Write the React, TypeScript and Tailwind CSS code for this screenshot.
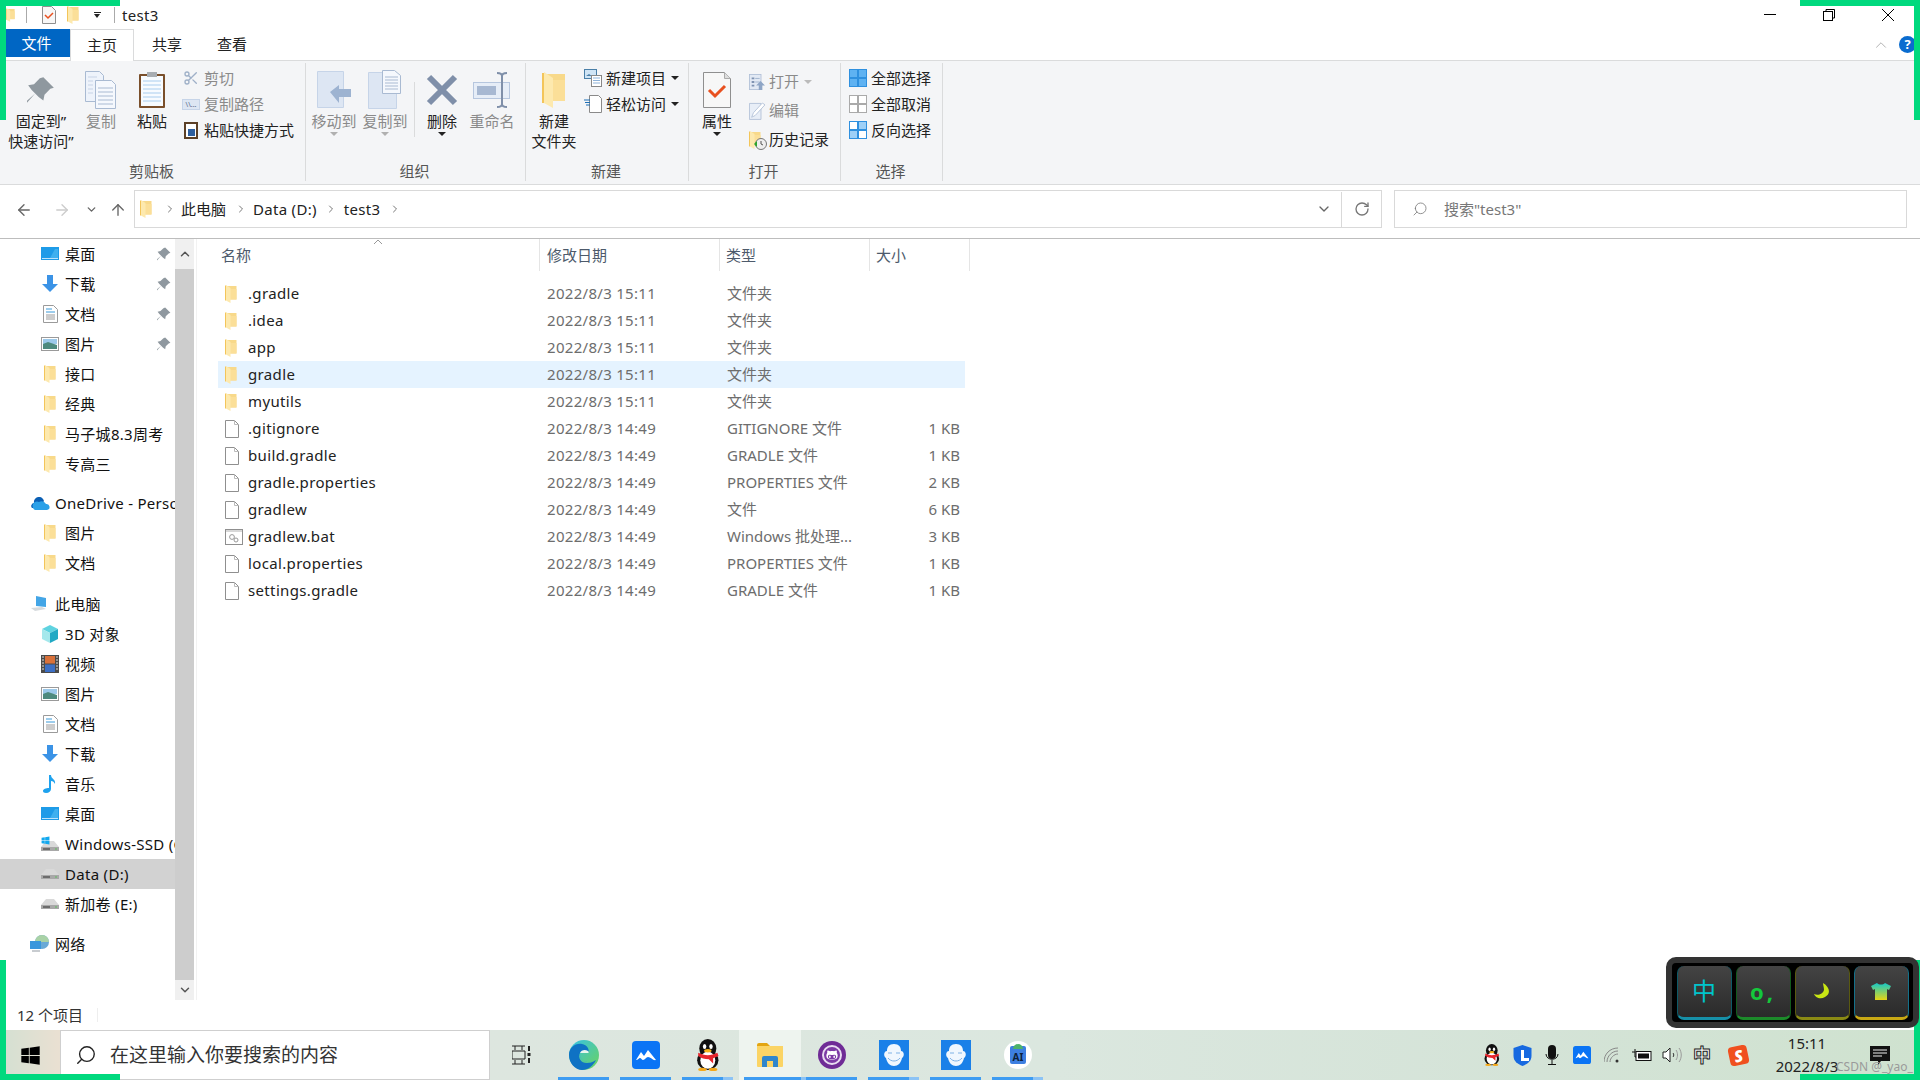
import type { ReactNode } from "react";
import { Scissors, ChevronRight, ChevronDown, ChevronUp, ArrowLeft, ArrowRight, ArrowUp, RotateCw, Search } from "lucide-react";
import { FaGithubAlt, FaWindows } from "react-icons/fa";

const Folder = ({ w = 12, h = 18 }: { w?: number; h?: number }) => (
  <svg width={w} height={h} viewBox="0 0 12 18">
    <path d="M1 1h10.500v13.500H1z" fill="#f8d98a" />
    <path d="M5 4h6.500v10.500H5z" fill="#fbdf98" />
    <path d="M1 0l4.500 3v15L1 15.500z" fill="#fde9ae" />
    <path d="M0.500 0.500v15" stroke="#f3c55a" strokeWidth="1" />
  </svg>
);

const Desktop = () => (
  <svg width="18" height="14" viewBox="0 0 18 14"><rect width="18" height="13" fill="#1e9be8" /><path d="M1 11h16v1H1z" fill="#bde3fb" /><path d="M9 11l5-9h3v9z" fill="#3fb0ef" /></svg>
);
const Download = () => (
  <svg width="18" height="18" viewBox="0 0 18 18"><path d="M6 0h6v9h5l-8 8-8-8h5z" fill="#3b93e6" /></svg>
);
const DocIcon = () => (
  <svg width="15" height="18" viewBox="0 0 15 18"><path d="M.5.5h10l4 4v13H.5z" fill="#fff" stroke="#9a9a9a" /><path d="M3 4h6M3 7h9" stroke="#3a9ad9" /><path d="M3 10h9M3 12h9M3 14h9" stroke="#9a9a9a" /></svg>
);
const Picture = () => (
  <svg width="18" height="14" viewBox="0 0 18 14"><rect x=".5" y=".5" width="17" height="13" fill="#fff" stroke="#9a9a9a" /><rect x="2" y="2" width="14" height="5" fill="#9cc9ea" /><path d="M2 7l5-2 9 3v4H2z" fill="#4d8a7e" /></svg>
);
const Cube = () => (
  <svg width="18" height="18" viewBox="0 0 18 18"><path d="M9 0l8 4-8 4-8-4z" fill="#5fd3e0" /><path d="M1 4l8 4v10l-8-4z" fill="#a4e8ec" /><path d="M17 4L9 8v10l8-4z" fill="#21a9c4" /></svg>
);
const Film = () => (
  <svg width="18" height="18" viewBox="0 0 18 18"><rect width="18" height="18" fill="#4a4a4a" /><rect x="4" y="1" width="10" height="7.500" fill="#d9713a" /><rect x="4" y="9.500" width="10" height="7.500" fill="#3c6fc4" /><path d="M1 2h2M1 5h2M1 8h2M1 11h2M1 14h2M15 2h2M15 5h2M15 8h2M15 11h2M15 14h2" stroke="#ddd" /></svg>
);
const Note = () => (
  <svg width="14" height="18" viewBox="0 0 14 18"><path d="M6 0h2c0 4 5 4 4 9-1-2-2-3-4-3v8c0 2-2 4-5 4-2 0-3-1-3-2 0-2 3-3 6-3z" fill="#1ea2ee" /></svg>
);
const Drive = () => (
  <svg width="18" height="11" viewBox="0 0 18 11"><path d="M5 0h8l5 6H0z" fill="#d9d9d9" /><path d="M0 6h18v4L0 10z" fill="#a8a8a8" /><path d="M2 8h7" stroke="#333" /><path d="M14 8h2" stroke="#5fbf5f" /></svg>
);
const WinDrive = () => (
  <div className="relative h-[16px] w-[20px]">
    <div className="absolute bottom-0 right-0"><Drive /></div>
    <FaWindows className="absolute left-0 top-0 text-[#12a8ee]" size={9} />
  </div>
);
const OneDrive = () => (
  <svg width="20" height="13" viewBox="0 0 20 13"><path d="M4 6a5 5 0 0 1 10-2l-5 7H2a3 3 0 0 1 2-5z" fill="#0a5fb4" /><path d="M9 5a5 5 0 0 1 7 2 3 3 0 0 1 1 6H5a3 3 0 0 1 4-8z" fill="#2aa0e8" /></svg>
);
const Pc = () => (
  <svg width="20" height="16" viewBox="0 0 20 16"><path d="M6 0l10 2v9L6 10z" fill="#43a5e6" /><path d="M1 12l11-1 4 2-11 2z" fill="#d6dadd" /></svg>
);
const Network = () => (
  <svg width="20" height="18" viewBox="0 0 20 18"><circle cx="12" cy="7" r="7" fill="#6aa9d6" /><path d="M5 7a7 7 0 0 1 14 0" fill="#a9d2a6" /><rect y="6" width="11" height="8" fill="#3a97dc" /><path d="M2 15h8v2H2z" fill="#c8ccd0" /></svg>
);
const Pin = ({ size = 14, color = "#8f989f" }: { size?: number; color?: string }) => (
  <svg width={size} height={size} viewBox="0 0 24 24"><path d="M14 1l9 9-3 1-5 5-1 5-4-3-3-3-7 8-1-1 8-7-3-3-3-4 5-1 5-5z" fill={color} /></svg>
);
const PlainFile = () => (
  <svg width="14" height="18" viewBox="0 0 14 18"><path d="M.5.500h9l4 4v13H.5z" fill="#fff" stroke="#8f8f8f" /><path d="M9.500.500v4h4" fill="none" stroke="#bbb" /></svg>
);
const BatFile = () => (
  <svg width="18" height="16" viewBox="0 0 18 16"><rect x=".5" y=".5" width="17" height="15" fill="#fff" stroke="#8f8f8f" /><path d="M1 1h16v2H1z" fill="#d8d8d8" /><circle cx="7" cy="8" r="2.400" fill="none" stroke="#999" /><circle cx="11" cy="11" r="2" fill="none" stroke="#999" /></svg>
);

const CopyIcon = () => (
  <svg width="32" height="38" viewBox="0 0 32 38"><path d="M.5.500h14l4 4v26H.5z" fill="#eef3fb" stroke="#a9bad2" /><path d="M10.500 9.500h16l4 4v24h-20z" fill="#f5f8fd" stroke="#a9bad2" /><path d="M13 17h15M13 21h15M13 25h15M13 29h15M13 33h15" stroke="#a9bad2" /><path d="M3 6h9M3 10h5M3 14h5M3 18h5M3 22h5" stroke="#c7d3e6" /></svg>
);
const PasteIcon = () => (
  <svg width="28" height="38" viewBox="0 0 28 38"><rect x="1" y="3" width="26" height="34" rx="1" fill="#7a4f2b" /><rect x="3" y="5" width="22" height="30" fill="#f7fbff" /><path d="M5 10h18M5 14h18M5 18h18M5 22h18M5 26h18M5 30h18" stroke="#a9cdee" /><rect x="9" y="1" width="10" height="5" fill="#a8adb2" /></svg>
);
const MoveIcon = () => (
  <svg width="34" height="38" viewBox="0 0 34 38"><path d="M.5.500h26v36H.5z" fill="#dde6f3" stroke="#c6d4e8" /><path d="M13 21l9-7v4h12v8H22v6z" fill="#9db3d1" /></svg>
);
const CopyToIcon = () => (
  <svg width="34" height="40" viewBox="0 0 34 40"><path d="M.5 2.500h28v36H.5z" fill="#dde6f3" stroke="#c6d4e8" /><path d="M14.500.500h12l6 5v18h-18z" fill="#f5f8fd" stroke="#a9bad2" /><path d="M17 7h13M17 10h13M17 13h13M17 16h13M17 19h13" stroke="#a9bad2" /></svg>
);
const DeleteIcon = () => (
  <svg width="32" height="32" viewBox="0 0 32 32"><path d="M3 3l26 26M29 3L3 29" stroke="#7f8fa9" strokeWidth="6" /></svg>
);
const RenameIcon = () => (
  <svg width="38" height="36" viewBox="0 0 38 36"><rect x=".5" y="10.500" width="36" height="16" fill="#e6edf7" stroke="#b6c6de" /><rect x="4" y="14" width="19" height="9" fill="#a7b8d2" /><path d="M24 1c3 0 5 1 5 3v28c0 2-2 3-5 3M34 1c-3 0-5 1-5 3v28c0 2 2 3 5 3" fill="none" stroke="#7f8fa9" strokeWidth="2" /></svg>
);
const NewItem = () => (
  <svg width="18" height="18" viewBox="0 0 18 18"><rect x=".5" y=".5" width="12" height="9" fill="#cfe4f5" stroke="#4a7fa8" /><path d="M2 7l3-2 3 2z" fill="#4a7fa8" /><rect x="7.500" y="6.500" width="10" height="11" fill="#fff" stroke="#888" /><path d="M9 9h7M9 11.500h7M9 14h7" stroke="#8fb3d9" /></svg>
);
const EasyAccess = () => (
  <svg width="18" height="18" viewBox="0 0 18 18"><path d="M5.500.500h9l3 3v14h-12z" fill="#fff" stroke="#8a8a8a" /><path d="M0 5h6M1 7.500h5M2 10h4" stroke="#1f6fb5" /></svg>
);
const PropsIcon = () => (
  <svg width="28" height="36" viewBox="0 0 28 36"><path d="M.5.500h21l6 6v29H.5z" fill="#f7f7f7" stroke="#8f8f8f" /><path d="M21.500.500v6h6" fill="#ddd" stroke="#aaa" /><path d="M6 18l6 6 10-10" fill="none" stroke="#e8501f" strokeWidth="3" /></svg>
);
const OpenIcon = () => (
  <svg width="18" height="18" viewBox="0 0 18 18"><rect x=".5" y=".5" width="13" height="17" fill="#e2e9f4" stroke="#b2c1d8" /><path d="M3 4h3v2H3zM3 8h3v2H3zM3 12h3v2H3z" fill="#7f93b2" /><path d="M7 5h5M7 9h5" stroke="#9db0cb" /><path d="M13 8l5 5h-3v5h-4v-5H8z" fill="#8ea5c6" /></svg>
);
const EditIcon = () => (
  <svg width="18" height="20" viewBox="0 0 18 20"><path d="M.5 1.500h13v18H.5z" fill="#e8eef7" stroke="#b2c1d8" /><path d="M3 17l2-5L15 1l3 2L7 15z" fill="#fff" stroke="#b2c1d8" /></svg>
);
const HistoryIcon = () => (
  <div className="relative h-[18px] w-[18px]">
    <Folder w={12} h={18} />
    <svg className="absolute bottom-[-1px] right-[-2px]" width="13" height="13" viewBox="0 0 13 13"><circle cx="7" cy="7" r="5.500" fill="#eee" stroke="#777" /><path d="M7 4v3l2 1" stroke="#555" fill="none" /><path d="M0 7l3-3v6z" fill="#2da52d" /></svg>
  </div>
);
const Grid4 = ({ fills, stroke }: { fills: string[]; stroke: string }) => (
  <svg width="18" height="18" viewBox="0 0 18 18">
    {fills.map((f, i) => (
      <rect key={i} x={i % 2 ? 9.5 : 0.5} y={i < 2 ? 0.5 : 9.5} width="8" height="8" fill={f} stroke={stroke} />
    ))}
  </svg>
);

const Big = ({ width, icon, lines, gray, caret }: { width: string; icon: ReactNode; lines: string[]; gray?: boolean; caret?: boolean }) => (
  <div className={`flex shrink-0 flex-col items-center ${width} ${gray ? "text-[#8a8a8a]" : "text-[#222]"}`}>
    <div className="flex h-[42px] items-center">{icon}</div>
    {lines.map((l) => (
      <div key={l} className="whitespace-nowrap leading-[20px]">{l}</div>
    ))}
    {caret && <div className={`mt-[1px] h-0 w-0 border-x-[4px] border-t-[4px] border-x-transparent ${gray ? "border-t-[#b0b0b0]" : "border-t-[#222]"}`} />}
  </div>
);

const Small = ({ icon, label, gray, caret, h, iconW = "w-[18px]", grayCaret }: { icon: ReactNode; label: string; gray?: boolean; caret?: boolean; h: string; iconW?: string; grayCaret?: boolean }) => (
  <div className={`flex items-center gap-[4px] whitespace-nowrap ${h} ${gray ? "text-[#8a8a8a]" : "text-[#222]"}`}>
    <div className={`flex justify-center ${iconW}`}>{icon}</div>
    <span>{label}</span>
    {caret && <div className={`ml-[1px] h-0 w-0 border-x-[4px] border-t-[4px] border-x-transparent ${grayCaret ? "border-t-[#bbb]" : "border-t-[#222]"}`} />}
  </div>
);

const Group = ({ width, label, children }: { width: string; label: string; children: ReactNode }) => (
  <div className={`flex h-[118px] shrink-0 flex-col border-r border-[#dadbdc] ${width}`}>
    <div className="flex h-[99px] pt-[6px]">{children}</div>
    <div className="h-[18px] pr-[2px] text-center leading-[18px] text-[#555]">{label}</div>
  </div>
);

const navTop = [
  { icon: <Desktop />, label: "桌面", pin: true },
  { icon: <Download />, label: "下载", pin: true },
  { icon: <DocIcon />, label: "文档", pin: true },
  { icon: <Picture />, label: "图片", pin: true },
  { icon: <Folder />, label: "接口" },
  { icon: <Folder />, label: "经典" },
  { icon: <Folder />, label: "马子城8.3周考" },
  { icon: <Folder />, label: "专高三" },
];
const navDrive = [
  { icon: <Folder />, label: "图片" },
  { icon: <Folder />, label: "文档" },
];
const navPc = [
  { icon: <Cube />, label: "3D 对象" },
  { icon: <Film />, label: "视频" },
  { icon: <Picture />, label: "图片" },
  { icon: <DocIcon />, label: "文档" },
  { icon: <Download />, label: "下载" },
  { icon: <Note />, label: "音乐" },
  { icon: <Desktop />, label: "桌面" },
  { icon: <WinDrive />, label: "Windows-SSD (C:)" },
  { icon: <Drive />, label: "Data (D:)", selected: true },
  { icon: <Drive />, label: "新加卷 (E:)" },
];

const NavRow = ({ icon, label, pin, selected }: { icon: ReactNode; label: string; pin?: boolean; selected?: boolean }) => (
  <div className={`relative flex h-[30px] items-center pl-[41px] ${selected ? "bg-[#d2d2d2]" : ""}`}>
    <div className="flex w-[24px] shrink-0 justify-start">
      <div className="flex w-[18px] justify-center">{icon}</div>
    </div>
    <span className="overflow-hidden whitespace-nowrap tracking-[0.3px] text-[#111]">{label}</span>
    {pin && <div className="absolute right-[4px] top-[8px]"><Pin /></div>}
  </div>
);

const NavHead = ({ icon, label }: { icon: ReactNode; label: string }) => (
  <div className="flex h-[30px] items-center pl-[30px]">
    <div className="w-[25px] shrink-0">{icon}</div>
    <span className="overflow-hidden whitespace-nowrap tracking-[0.3px] text-[#111]">{label}</span>
  </div>
);

const files = [
  { name: ".gradle", date: "2022/8/3 15:11", type: "文件夹", size: "", icon: "folder" },
  { name: ".idea", date: "2022/8/3 15:11", type: "文件夹", size: "", icon: "folder" },
  { name: "app", date: "2022/8/3 15:11", type: "文件夹", size: "", icon: "folder" },
  { name: "gradle", date: "2022/8/3 15:11", type: "文件夹", size: "", icon: "folder", hover: true },
  { name: "myutils", date: "2022/8/3 15:11", type: "文件夹", size: "", icon: "folder" },
  { name: ".gitignore", date: "2022/8/3 14:49", type: "GITIGNORE 文件", size: "1 KB", icon: "file" },
  { name: "build.gradle", date: "2022/8/3 14:49", type: "GRADLE 文件", size: "1 KB", icon: "file" },
  { name: "gradle.properties", date: "2022/8/3 14:49", type: "PROPERTIES 文件", size: "2 KB", icon: "file" },
  { name: "gradlew", date: "2022/8/3 14:49", type: "文件", size: "6 KB", icon: "file" },
  { name: "gradlew.bat", date: "2022/8/3 14:49", type: "Windows 批处理...", size: "3 KB", icon: "bat" },
  { name: "local.properties", date: "2022/8/3 14:49", type: "PROPERTIES 文件", size: "1 KB", icon: "file" },
  { name: "settings.gradle", date: "2022/8/3 14:49", type: "GRADLE 文件", size: "1 KB", icon: "file" },
];

const Mango = ({ size }: { size: number }) => (
  <svg width={size} height={size} viewBox="0 0 28 28"><rect width="28" height="28" rx="4" fill="#0a74f5" /><path d="M4 19l5-8 3 4 4-6 8 10c-3 1-5-3-8-3-2 0-3 3-5 3-1 0-2-2-3-2s-2 2-4 2z" fill="#fff" /></svg>
);
const Penguin = ({ size }: { size: number }) => (
  <svg width={size * 0.8} height={size} viewBox="0 0 24 30">
    <ellipse cx="12" cy="9" rx="8" ry="9" fill="#111" />
    <ellipse cx="12" cy="20" rx="10" ry="9" fill="#111" />
    <ellipse cx="12" cy="20" rx="7" ry="8" fill="#fff" />
    <ellipse cx="9" cy="7" rx="1.600" ry="2.400" fill="#fff" />
    <ellipse cx="15" cy="7" rx="1.600" ry="2.400" fill="#fff" />
    <ellipse cx="12" cy="11" rx="3.500" ry="1.600" fill="#f5b21a" />
    <path d="M3 13c6 3 12 3 18 0l1 3-5 2v5l-4-4c-4 0-7-1-10-3z" fill="#e6262c" />
    <ellipse cx="7" cy="28.500" rx="4" ry="1.500" fill="#f5a81a" />
    <ellipse cx="17" cy="28.500" rx="4" ry="1.500" fill="#f5a81a" />
  </svg>
);
const Edge = () => (
  <svg width="30" height="30" viewBox="0 0 30 30">
    <defs>
      <linearGradient id="edgeA" x1="0" y1="0" x2="1" y2="1"><stop offset="0" stopColor="#36c1e8" /><stop offset="1" stopColor="#6bd35c" /></linearGradient>
    </defs>
    <circle cx="15" cy="15" r="15" fill="url(#edgeA)" />
    <path d="M0 15C0 8 6 3 13 4c5 1 8 5 6 9h-8c-3 5 2 11 8 10 3 0 6-2 8-3-3 6-8 10-14 10C6 30 0 23 0 15z" fill="#0f72c4" />
    <path d="M11 13c1-3 5-4 8-2 1 1 1 2 0 2z" fill="#e7f6ee" />
    <path d="M11 13c-1 6 5 10 11 9 2 0 4-1 5-2-4 3-9 3-12 1-3-2-5-5-4-8z" fill="#2a9ad6" />
  </svg>
);
const ExplorerIcon = () => (
  <svg width="28" height="26" viewBox="0 0 28 26"><path d="M1 3a2 2 0 0 1 2-2h8l3 3H1z" fill="#e3a512" /><path d="M1 4h26v20a1 1 0 0 1-1 1H2a1 1 0 0 1-1-1z" fill="#fbd465" /><path d="M6 25V16a2 2 0 0 1 2-2h12a2 2 0 0 1 2 2v9h-5v-6h-6v6z" fill="#2f86cc" /></svg>
);
const Buddha = () => (
  <div className="flex h-[30px] w-[30px] items-center justify-center bg-[#1a80e8]">
    <svg width="24" height="22" viewBox="0 0 24 22"><path d="M12 0c5 0 7 3 7 7 3 0 4 5 1 7-1 5-4 8-8 8s-7-3-8-8c-3-2-2-7 1-7 0-4 2-7 7-7z" fill="#f0f7fe" /><path d="M6 9h4M14 9h4M6 14c3 4 9 4 12 0" stroke="#7fb2e6" fill="none" /></svg>
  </div>
);
const AiIcon = () => (
  <div className="relative flex h-[28px] w-[28px] items-center justify-center rounded-full bg-white">
    <div className="flex h-[18px] w-[16px] items-end justify-center rounded-[2px] bg-[#3d7fe0] text-[10px] font-bold leading-[13px] text-[#0d1f3a]">AI</div>
    <div className="absolute top-[3px] h-[5px] w-[10px] rounded-t-full bg-[#4db26a]" />
  </div>
);
const GithubRound = () => (
  <div className="flex h-[28px] w-[28px] items-center justify-center rounded-full bg-[#6f2b96]">
    <div className="flex h-[20px] w-[20px] items-center justify-center rounded-full border-[2px] border-[#e9dcf1] bg-[#7d3aa5]">
      <FaGithubAlt className="text-white" size={12} />
    </div>
  </div>
);

const taskItems = [
  { icon: <Edge />, bar: "w-[51px]" },
  { icon: <Mango size={28} />, bar: "w-[51px]" },
  { icon: <Penguin size={32} />, bar: "w-[41px]", extra: true },
  { icon: <ExplorerIcon />, bar: "w-[57px]", active: true, extra: true },
  { icon: <GithubRound />, bar: "w-[51px]" },
  { icon: <Buddha />, bar: "w-[41px]", extra: true },
  { icon: <Buddha />, bar: "w-[51px]" },
  { icon: <AiIcon />, bar: "w-[41px]", extra: true },
];

const Key = ({ edge, sides, children }: { edge: string; sides: string; children: ReactNode }) => (
  <div className={`flex h-[54px] w-[55px] items-center justify-center rounded-[7px] border-x border-b-[3px] bg-[linear-gradient(#444,#2a2a2a)] ${edge} ${sides}`}>
    {children}
  </div>
);

export default function App() {
  return (
    <div className="relative flex h-[1080px] w-[1920px] flex-col overflow-hidden bg-white text-[15px] text-[#222] [font-family:'Noto_Sans','Noto_Sans_CJK_SC',sans-serif]">
      {/* title bar */}
      <div className="flex h-[29px] shrink-0 items-center">
        <div className="ml-[6px] w-[9px]"><Folder w={9} h={16} /></div>
        <div className="ml-[11px] h-[16px] w-px bg-[#aaa]" />
        <div className="ml-[15px] w-[14px]">
          <svg width="14" height="18" viewBox="0 0 14 18"><path d="M.5.500h9l4 4v13H.5z" fill="#f7f7f7" stroke="#8f8f8f" /><path d="M3 9l3 3 5-5" fill="none" stroke="#e8501f" strokeWidth="1.500" /></svg>
        </div>
        <div className="ml-[11px]"><Folder w={12} h={18} /></div>
        <div className="ml-[14px] flex w-[8px] flex-col items-center gap-[1px]">
          <div className="h-px w-[7px] bg-[#222]" />
          <div className="h-0 w-0 border-x-[3.5px] border-t-[4px] border-x-transparent border-t-[#222]" />
        </div>
        <div className="ml-[13px] h-[16px] w-px bg-[#aaa]" />
        <span className="ml-[7px] pt-[1px] tracking-[0.3px]">test3</span>
        <div className="ml-auto flex items-center pr-[26px]">
          <div className="h-px w-[12px] bg-black" />
          <svg className="ml-[47px]" width="12" height="12" viewBox="0 0 12 12"><rect x=".5" y="2.500" width="9" height="9" fill="#fff" stroke="#000" /><path d="M3 2.500V.5h8.500V9H9.500" fill="none" stroke="#000" /></svg>
          <svg className="ml-[47px]" width="12" height="12" viewBox="0 0 12 12"><path d="M0 0l12 12M12 0L0 12" stroke="#000" /></svg>
        </div>
      </div>

      {/* tabs */}
      <div className="relative flex h-[32px] shrink-0 border-b border-[#dadbdc] pl-[6px]">
        <div className="flex h-[28px] w-[64px] items-center justify-center bg-[#0066c4] pr-[3px] text-white">文件</div>
        <div className="z-10 flex h-[32px] w-[64px] items-center justify-center border-x border-t border-[#dadbdc] bg-white">主页</div>
        <div className="flex h-[31px] w-[66px] items-center justify-center">共享</div>
        <div className="flex h-[31px] w-[64px] items-center justify-center">查看</div>
        <div className="ml-auto flex h-[31px] items-center gap-[9px] pr-[4px]">
          <ChevronUp size={18} strokeWidth={1} className="text-[#999]" />
          <div className="flex h-[17px] w-[17px] items-center justify-center rounded-full bg-[#0a6ccf] text-[13px] font-bold text-white">?</div>
        </div>
      </div>

      {/* ribbon */}
      <div className="flex h-[124px] shrink-0 border-b border-[#dadbdc] bg-[#f4f5f7] pt-[2px]">
        <Group width="w-[306px]" label="剪贴板">
          <div className="w-[4px]" />
          <Big width="w-[74px]" icon={<Pin size={28} />} lines={["固定到”", "快速访问”"]} />
          <Big width="w-[46px]" icon={<CopyIcon />} lines={["复制"]} gray />
          <Big width="w-[56px]" icon={<PasteIcon />} lines={["粘贴"]} />
          <div className="-mt-[4px] flex flex-col pl-[2px]">
            <Small h="h-[26px]" icon={<Scissors size={16} className="text-[#9fb0c8]" />} label="剪切" gray />
            <Small h="h-[26px]" icon={<div className="flex h-[11px] w-[18px] items-center justify-center border border-[#c6d4e8] bg-[#dde6f3] text-[7px] leading-none text-[#56698a]">\\...</div>} label="复制路径" gray />
            <Small h="h-[26px]" icon={<div className="flex h-[17px] w-[14px] items-end justify-center border-2 border-[#5c4026] bg-white pb-[1px]"><div className="h-[7px] w-[7px] bg-[#2e5f9e]" /></div>} label="粘贴快捷方式" />
          </div>
        </Group>
        <Group width="w-[220px]" label="组织">
          <Big width="w-[56px]" icon={<MoveIcon />} lines={["移动到"]} gray caret />
          <Big width="w-[46px]" icon={<CopyToIcon />} lines={["复制到"]} gray caret />
          <div className="ml-[6px] mt-[13px] h-[55px] w-px bg-[#dadbdc]" />
          <Big width="w-[54px]" icon={<DeleteIcon />} lines={["删除"]} caret />
          <Big width="w-[46px]" icon={<RenameIcon />} lines={["重命名"]} gray />
        </Group>
        <Group width="w-[163px]" label="新建">
          <Big width="w-[56px]" icon={<Folder w={24} h={36} />} lines={["新建", "文件夹"]} />
          <div className="-mt-[4px] flex flex-col pl-[2px]">
            <Small h="h-[26px]" icon={<NewItem />} label="新建项目" caret />
            <Small h="h-[26px]" icon={<EasyAccess />} label="轻松访问" caret />
          </div>
        </Group>
        <Group width="w-[152px]" label="打开">
          <Big width="w-[56px]" icon={<PropsIcon />} lines={["属性"]} caret />
          <div className="-mt-[2px] flex flex-col pl-[4px]">
            <Small h="h-[29px]" iconW="w-[16px]" icon={<OpenIcon />} label="打开" gray caret grayCaret />
            <Small h="h-[29px]" iconW="w-[16px]" icon={<EditIcon />} label="编辑" gray />
            <Small h="h-[29px]" iconW="w-[16px]" icon={<HistoryIcon />} label="历史记录" />
          </div>
        </Group>
        <Group width="w-[102px]" label="选择">
          <div className="-mt-[4px] flex flex-col pl-[8px]">
            <Small h="h-[26px]" icon={<Grid4 fills={["#5fb2f2", "#5fb2f2", "#5fb2f2", "#5fb2f2"]} stroke="#2f90df" />} label="全部选择" />
            <Small h="h-[26px]" icon={<Grid4 fills={["#fff", "#fff", "#fff", "#fff"]} stroke="#aaa" />} label="全部取消" />
            <Small h="h-[26px]" icon={<Grid4 fills={["#fff", "#9ed0f7", "#9ed0f7", "#fff"]} stroke="#2f90df" />} label="反向选择" />
          </div>
        </Group>
      </div>

      {/* address bar */}
      <div className="flex h-[54px] shrink-0 items-center border-b border-[#bdbdbd] pb-[6px]">
        <div className="flex w-[134px] items-center pl-[15px] pt-[2px] text-[#666]">
          <ArrowLeft size={18} strokeWidth={1.800} />
          <ArrowRight size={18} strokeWidth={1.800} className="ml-[20px] text-[#ccc]" />
          <ChevronDown size={13} strokeWidth={2.500} className="ml-[14px]" />
          <ArrowUp size={18} strokeWidth={1.800} className="ml-[11px]" />
        </div>
        <div className="flex h-[38px] w-[1248px] items-center border border-[#d9d9d9] pl-[5px] pt-[1px] text-[#222]">
          <Folder w={12} h={18} />
          <ChevronRight size={12} className="ml-[12px] text-[#777]" strokeWidth={2} />
          <span className="ml-[5px]">此电脑</span>
          <ChevronRight size={12} className="ml-[9px] text-[#777]" strokeWidth={2} />
          <span className="ml-[6px] tracking-[0.3px]">Data (D:)</span>
          <ChevronRight size={12} className="ml-[8px] text-[#777]" strokeWidth={2} />
          <span className="ml-[7px] tracking-[0.3px]">test3</span>
          <ChevronRight size={12} className="ml-[9px] text-[#777]" strokeWidth={2} />
          <ChevronDown size={16} strokeWidth={2} className="ml-auto mr-[9px] text-[#666]" />
          <div className="flex h-full w-[40px] items-center justify-center border-l border-[#d9d9d9]">
            <RotateCw size={16} strokeWidth={2} className="text-[#777]" />
          </div>
        </div>
        <div className="ml-[12px] flex h-[38px] w-[513px] items-center border border-[#d9d9d9] pl-[17px] pt-[1px] text-[#777]">
          <Search size={16} strokeWidth={1.200} className="-scale-x-100" />
          <span className="ml-[16px]">搜索"test3"</span>
        </div>
      </div>

      {/* main */}
      <div className="flex min-h-0 flex-1">
        <div className="flex w-[197px] shrink-0 border-r border-[#f2f2f2]">
          <div className="w-[175px] shrink-0 overflow-hidden">
            {navTop.map((n) => <NavRow key={n.label} {...n} />)}
            <div className="h-[9px]" />
            <NavHead icon={<OneDrive />} label="OneDrive - Personal" />
            {navDrive.map((n) => <NavRow key={n.label} {...n} />)}
            <div className="h-[11px]" />
            <NavHead icon={<Pc />} label="此电脑" />
            {navPc.map((n) => <NavRow key={n.label} {...n} />)}
            <div className="h-[10px]" />
            <NavHead icon={<Network />} label="网络" />
          </div>
          <div className="flex w-[19px] shrink-0 flex-col">
            <div className="flex h-[30px] items-center justify-center bg-[#f0f0f0]"><ChevronUp size={14} strokeWidth={2.500} className="text-[#555]" /></div>
            <div className="flex-1 bg-[#cdcdcd]" />
            <div className="flex h-[20px] items-center justify-center bg-[#f0f0f0]"><ChevronDown size={14} strokeWidth={2.500} className="text-[#555]" /></div>
          </div>
        </div>

        <div className="flex-1 pl-[21px]">
          <div className="relative flex h-[32px] w-[752px] text-[#4d5a6b]">
            <svg className="absolute left-[155px] top-0" width="10" height="6" viewBox="0 0 10 6"><path d="M1 5l4-4 4 4" fill="none" stroke="#999" /></svg>
            <div className="flex w-[322px] items-center border-r border-[#e5e5e5] pl-[3px]">名称</div>
            <div className="flex w-[180px] items-center border-r border-[#e5e5e5] pl-[7px]">修改日期</div>
            <div className="flex w-[150px] items-center border-r border-[#e5e5e5] pl-[6px]">类型</div>
            <div className="flex w-[100px] items-center border-r border-[#e5e5e5] pl-[6px]">大小</div>
          </div>
          <div className="pt-[9px]">
            {files.map((f) => (
              <div key={f.name} className={`flex h-[27px] w-[747px] items-center ${f.hover ? "bg-[#e5f3ff]" : ""}`}>
                <div className="flex w-[30px] justify-start pl-[7px]">
                  {f.icon === "folder" ? <Folder /> : f.icon === "bat" ? <BatFile /> : <PlainFile />}
                </div>
                <div className="w-[299px] tracking-[0.35px] text-[#222]">{f.name}</div>
                <div className="w-[180px] tracking-[0.3px] text-[#6d6d6d]">{f.date}</div>
                <div className="w-[172px] text-[#6d6d6d]">{f.type}</div>
                <div className="w-[61px] text-right text-[#6d6d6d]">{f.size}</div>
              </div>
            ))}
          </div>
        </div>
      </div>

      {/* status bar */}
      <div className="flex h-[30px] shrink-0 items-center pl-[17px] text-[#333]">
        <span>12 个项目</span>
        <div className="ml-[14px] h-[14px] w-px bg-[#eee]" />
      </div>

      {/* taskbar */}
      <div className="flex h-[50px] shrink-0 items-center bg-[linear-gradient(90deg,#d3e0d2,#e9e0d2_3%,#dde6df_25%,#dbe7df_55%,#d4e3d7_80%,#cfe2cf)]">
        <div className="flex w-[60px] items-center justify-center"><FaWindows size={21} className="text-black" /></div>
        <div className="flex h-full w-[430px] items-center border border-[#cfcfcf] bg-white pl-[14px] text-[#333]">
          <Search size={22} strokeWidth={1.500} className="-scale-x-100 text-[#222]" />
          <span className="ml-[13px] text-[19px]">在这里输入你要搜索的内容</span>
        </div>
        <div className="flex w-[63px] justify-center">
          <svg width="19" height="20" viewBox="0 0 19 20"><path d="M0 1h13M0 19h13M3 1v4M10 1v4M3 15v4M10 15v4M0 6h13v8H0z" fill="none" stroke="#222" strokeWidth="1" /><rect x="16" y="1" width="2" height="5" fill="#222" /><rect x="15.500" y="8" width="3" height="3" fill="#222" /><rect x="16" y="13" width="2" height="5" fill="#222" /></svg>
        </div>
        {taskItems.map((t, i) => (
          <div key={i} className={`relative flex h-full w-[62px] items-center justify-center ${t.active ? "bg-[#eef4ef]" : ""}`}>
            {t.icon}
            <div className="absolute bottom-0 left-[5px] flex h-[3px]">
              <div className={`${t.bar} bg-[#3e9cf2]`} />
              {t.extra && <div className="w-[10px] bg-[#8cc3f5]" />}
            </div>
          </div>
        ))}
        <div className="ml-auto flex h-full items-center pr-[15px]">
          <div className="flex w-[30px] justify-center"><Penguin size={22} /></div>
          <div className="flex w-[30px] justify-center">
            <svg width="19" height="21" viewBox="0 0 19 21"><path d="M9.500 0l9 3v8c0 5-4 8-9 10-5-2-9-5-9-10V3z" fill="#1769e0" /><path d="M8 5h3v8h5v3H8z" fill="#fff" /></svg>
          </div>
          <div className="flex w-[30px] justify-center">
            <svg width="14" height="20" viewBox="0 0 14 20"><rect x="3" width="8" height="14" rx="4" fill="#111" /><path d="M1 9c0 7 12 7 12 0M7 15v4M3 19.500h8" fill="none" stroke="#111" /></svg>
          </div>
          <div className="flex w-[30px] justify-center"><Mango size={18} /></div>
          <div className="flex w-[30px] justify-center">
            <svg width="16" height="16" viewBox="0 0 16 16"><path d="M1 15C1 7 7 1 15 1M4 15c0-6 5-11 11-11M7 15c0-4 4-8 8-8" transform="translate(-1 0)" fill="none" stroke="#888" /><circle cx="13" cy="14" r="1.500" fill="#333" /></svg>
          </div>
          <div className="flex w-[30px] justify-center">
            <svg width="20" height="13" viewBox="0 0 20 13"><path d="M0 3h3V0M3 3v5h2" fill="none" stroke="#111" /><rect x="4" y="2.500" width="15" height="9" fill="#fff" stroke="#111" /><rect x="6" y="4.500" width="11" height="5" fill="#111" /></svg>
          </div>
          <div className="flex w-[30px] justify-center">
            <svg width="20" height="16" viewBox="0 0 20 16"><path d="M1 5h3l4-4v14l-4-4H1z" fill="#fff" stroke="#222" /><path d="M11 6c1 1 1 3 0 4" fill="none" stroke="#333" /><path d="M14 3c2 3 2 7 0 10M17 1c3 4 3 10 0 14" fill="none" stroke="#999" /></svg>
          </div>
          <div className="flex w-[30px] justify-center"><span className="text-[18px] font-bold leading-none text-white [-webkit-text-stroke:1px_#222]">中</span></div>
          <div className="flex w-[42px] justify-center">
            <div className="flex h-[19px] w-[19px] -rotate-12 items-center justify-center rounded-[4px] bg-[#f0501f] text-[16px] font-black italic leading-none text-white">S</div>
          </div>
          <div className="flex w-[96px] flex-col items-center text-[15px] leading-[23px] text-[#222]">
            <span>15:11</span>
            <span>2022/8/3</span>
          </div>
          <div className="flex w-[50px] justify-center">
            <svg width="20" height="19" viewBox="0 0 20 19"><path d="M0 0h20v15H11l-3 4v-4H0z" fill="#111" /><path d="M3 4h14M3 7h14M3 10h9" stroke="#eee" /></svg>
          </div>
        </div>
      </div>

      <div className="absolute left-[1836px] top-[1058px] text-[12px] text-[#9a9a9a]">CSDN @_yao_</div>

      {/* screen corner marks */}
      <div className="absolute left-0 top-0 h-[6px] w-[120px] bg-[#00d97e]" />
      <div className="absolute left-0 top-0 h-[120px] w-[6px] bg-[#00d97e]" />
      <div className="absolute right-0 top-0 h-[6px] w-[120px] bg-[#00d97e]" />
      <div className="absolute right-0 top-0 h-[120px] w-[6px] bg-[#00d97e]" />
      <div className="absolute bottom-0 left-0 h-[6px] w-[120px] bg-[#00d97e]" />
      <div className="absolute bottom-0 left-0 h-[120px] w-[6px] bg-[#00d97e]" />
      <div className="absolute bottom-0 right-0 h-[6px] w-[120px] bg-[#00d97e]" />
      <div className="absolute bottom-0 right-0 h-[120px] w-[6px] bg-[#00d97e]" />

      {/* floating IME toolbar */}
      <div className="absolute left-[1666px] top-[957px] flex h-[71px] w-[253px] items-center justify-center gap-[4px] rounded-[10px] border-[6px] border-[#333] bg-black">
        <Key edge="border-b-[#1690a8]" sides="border-x-[#0d5a68]"><span className="text-[24px] leading-none text-[#00c4cc]">中</span></Key>
        <Key edge="border-b-[#1c8a2a]" sides="border-x-[#125a1c]"><span className="text-[22px] font-bold leading-none tracking-[3px] text-[#14c83c]">o,</span></Key>
        <Key edge="border-b-[#8a8a14]" sides="border-x-[#5a5a10]">
          <svg width="16" height="16" viewBox="0 0 16 16"><path d="M9 0c7 4 8 11 2 14-5 3-10 0-11-3 4 2 9 0 10-4 0-3-1-5-1-7z" fill="#c8e614" /></svg>
        </Key>
        <Key edge="border-b-[#c8a814]" sides="border-x-[#14708a]">
          <svg width="20" height="17" viewBox="0 0 20 17">
            <defs><linearGradient id="shirt" x1="0" y1="0" x2="0" y2="1"><stop offset="0" stopColor="#14c8c8" /><stop offset="1" stopColor="#e6d614" /></linearGradient></defs>
            <path d="M6 0c2 2 6 2 8 0l6 3-2 4-2-1v11H4V6L2 7 0 3z" fill="url(#shirt)" />
          </svg>
        </Key>
      </div>
    </div>
  );
}
